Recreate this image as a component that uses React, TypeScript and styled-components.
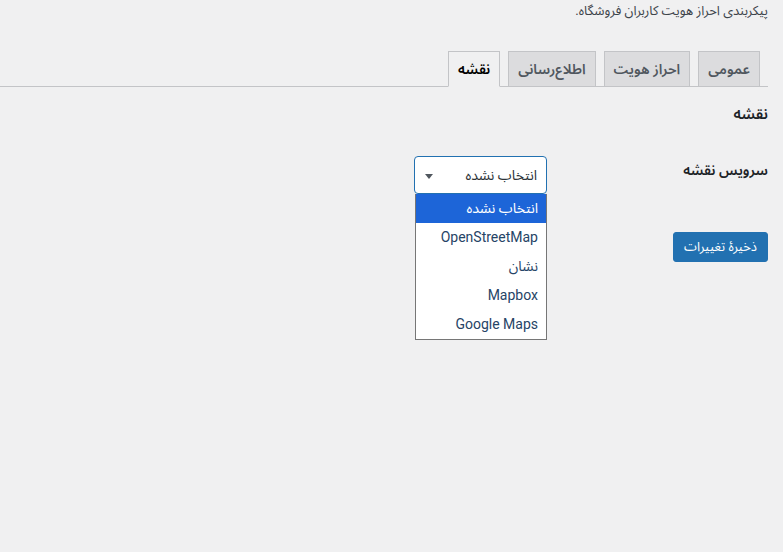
import React from "react";
import styled, { createGlobalStyle } from "styled-components";

const Global = createGlobalStyle`
  html, body { margin: 0; padding: 0; background: #f0f0f1; }
  body {
    direction: rtl;
    font-family: Roboto, "Noto Sans Arabic", "Noto Naskh Arabic", "DejaVu Sans", sans-serif;
    color: #1d2327;
    font-size: 13px;
  }
`;

const Wrap = styled.div`
  padding: 0 15px 0 0;
  min-height: 552px;
  box-sizing: border-box;
`;

const Description = styled.p`
  margin: 0;
  padding-top: 3px;
  font-size: 13px;
  line-height: 16px;
  color: #3c434a;
`;

const TabBar = styled.nav`
  display: flex;
  margin-top: 32px;
  border-bottom: 1px solid #c3c4c7;
`;

const Tab = styled.a<{ $active?: boolean }>`
  display: block;
  margin-right: 8px;
  margin-bottom: -1px;
  padding: 5px 9px;
  height: 24px;
  line-height: 24px;
  font-size: 14px;
  font-weight: 600;
  border: 1px solid #c3c4c7;
  border-bottom: 1px solid ${(p) => (p.$active ? "#f0f0f1" : "#c3c4c7")};
  background: ${(p) => (p.$active ? "#f0f0f1" : "#dcdcde")};
  color: ${(p) => (p.$active ? "#000" : "#50575e")};
  text-decoration: none;
  white-space: nowrap;
`;

const Heading = styled.h2`
  margin: 17px 0 0;
  font-size: 15px;
  line-height: 20px;
  font-weight: 600;
  color: #1d2327;
`;

const FormRow = styled.div`
  display: flex;
  align-items: flex-start;
  margin-top: 32px;
`;

const Label = styled.label`
  width: 200px;
  padding-left: 21px;
  padding-top: 4px;
  font-size: 14px;
  line-height: 20px;
  font-weight: 600;
  color: #1d2327;
`;

const SelectBox = styled.div`
  position: relative;
  width: 133px;
`;

const SelectControl = styled.div`
  box-sizing: border-box;
  height: 38px;
  display: flex;
  align-items: center;
  justify-content: space-between;
  padding: 0 9px 0 10px;
  border: 1px solid #2271b1;
  border-radius: 4px;
  background: #fff;
  font-size: 14px;
  color: #2c3338;
`;

const Caret = styled.span`
  width: 0;
  height: 0;
  border-left: 4.5px solid transparent;
  border-right: 4.5px solid transparent;
  border-top: 5px solid #50575e;
  margin-top: 2px;
`;

const OptionList = styled.ul`
  position: absolute;
  top: 38px;
  right: 0;
  width: 132px;
  box-sizing: border-box;
  margin: 0;
  padding: 0;
  list-style: none;
  background: #fff;
  border: 1px solid #767676;
  border-top: none;
  z-index: 5;
`;

const Option = styled.li<{ $selected?: boolean }>`
  height: 29px;
  line-height: 29px;
  padding-right: 8px;
  font-size: 14px;
  background: ${(p) => (p.$selected ? "#1d65d8" : "#fff")};
  color: ${(p) => (p.$selected ? "#fff" : "#264466")};
  white-space: nowrap;
`;

const Submit = styled.div`
  display: flex;
  margin-top: 38px;
`;

const Button = styled.button`
  height: 30px;
  padding: 0 10px;
  border: 1px solid #2271b1;
  border-radius: 3px;
  background: #2271b1;
  color: #fff;
  font-family: inherit;
  font-size: 13px;
  line-height: 28px;
  direction: rtl;
`;

export default function App() {
  const options = ["انتخاب نشده", "OpenStreetMap", "نشان", "Mapbox", "Google Maps"];
  return (
    <>
      <Global />
      <Wrap>
        <Description>پیکربندی احراز هویت کاربران فروشگاه.</Description>
        <TabBar>
          <Tab>عمومی</Tab>
          <Tab>احراز هویت</Tab>
          <Tab>اطلاع‌رسانی</Tab>
          <Tab $active>نقشه</Tab>
        </TabBar>
        <Heading>نقشه</Heading>
        <FormRow>
          <Label>سرویس نقشه</Label>
          <SelectBox>
            <SelectControl>
              <span>انتخاب نشده</span>
              <Caret />
            </SelectControl>
            <OptionList>
              {options.map((o, i) => (
                <Option key={o} $selected={i === 0}>
                  {o}
                </Option>
              ))}
            </OptionList>
          </SelectBox>
        </FormRow>
        <Submit>
          <Button>ذخیرهٔ تغییرات</Button>
        </Submit>
      </Wrap>
    </>
  );
}
